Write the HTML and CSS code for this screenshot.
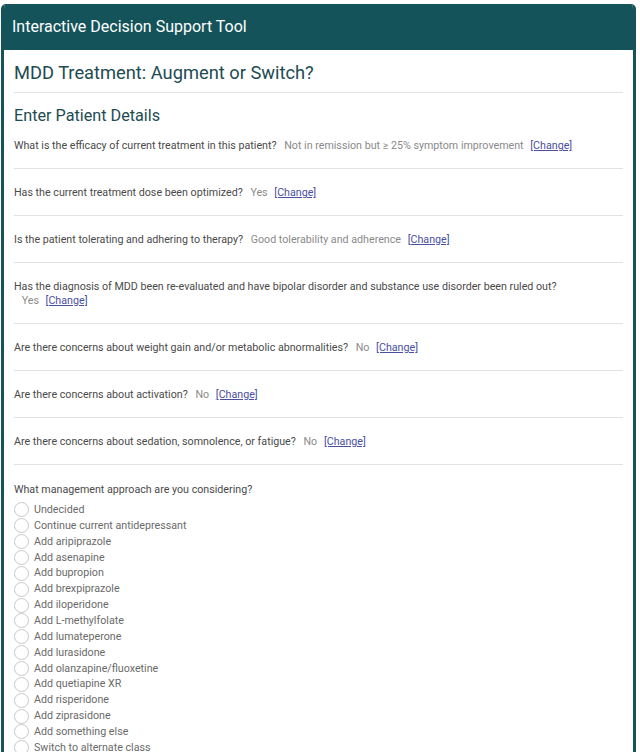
FILE: index.html
```html
<!DOCTYPE html>
<html>
<head>
<meta charset="utf-8">
<link rel="stylesheet" href="styles.css">
</head>
<body>
<div class="card">
  <div class="card-header">Interactive Decision Support Tool</div>
  <div class="card-body">
    <h1 class="title">MDD Treatment: Augment or Switch?</h1>
    <h2 class="subtitle">Enter Patient Details</h2>
    <div class="row first"><span class="q">What is the efficacy of current treatment in this patient?</span> <span class="a">Not in remission but ≥ 25% symptom improvement</span> <a class="chg" href="#">[Change]</a></div>
    <div class="row"><span class="q">Has the current treatment dose been optimized?</span> <span class="a">Yes</span> <a class="chg" href="#">[Change]</a></div>
    <div class="row"><span class="q">Is the patient tolerating and adhering to therapy?</span> <span class="a">Good tolerability and adherence</span> <a class="chg" href="#">[Change]</a></div>
    <div class="row"><span class="q">Has the diagnosis of MDD been re-evaluated and have bipolar disorder and substance use disorder been ruled out?</span><br>&nbsp;<span class="a">Yes</span> <a class="chg" href="#">[Change]</a></div>
    <div class="row"><span class="q">Are there concerns about weight gain and/or metabolic abnormalities?</span> <span class="a">No</span> <a class="chg" href="#">[Change]</a></div>
    <div class="row"><span class="q">Are there concerns about activation?</span> <span class="a">No</span> <a class="chg" href="#">[Change]</a></div>
    <div class="row"><span class="q">Are there concerns about sedation, somnolence, or fatigue?</span> <span class="a">No</span> <a class="chg" href="#">[Change]</a></div>
    <div class="question-block">
      <div class="q">What management approach are you considering?</div>
      <ul class="radios">
        <li><span class="radio"></span>Undecided</li>
        <li><span class="radio"></span>Continue current antidepressant</li>
        <li><span class="radio"></span>Add aripiprazole</li>
        <li><span class="radio"></span>Add asenapine</li>
        <li><span class="radio"></span>Add bupropion</li>
        <li><span class="radio"></span>Add brexpiprazole</li>
        <li><span class="radio"></span>Add iloperidone</li>
        <li><span class="radio"></span>Add L-methylfolate</li>
        <li><span class="radio"></span>Add lumateperone</li>
        <li><span class="radio"></span>Add lurasidone</li>
        <li><span class="radio"></span>Add olanzapine/fluoxetine</li>
        <li><span class="radio"></span>Add quetiapine XR</li>
        <li><span class="radio"></span>Add risperidone</li>
        <li><span class="radio"></span>Add ziprasidone</li>
        <li><span class="radio"></span>Add something else</li>
        <li><span class="radio"></span>Switch to alternate class</li>
      </ul>
    </div>
  </div>
</div>
</body>
</html>
```
FILE: styles.css
```css
html, body {
  margin: 0;
  padding: 0;
  background: #fff;
}
body {
  padding: 4px 4px 0 1px;
  font-family: Roboto, "Liberation Sans", sans-serif;
}
.card {
  border: 3px solid #14535a;
  border-top: none;
  border-radius: 5px 5px 0 0;
  overflow: hidden;
  height: 760px;
}
.card-header {
  background: #14535a;
  color: #fff;
  font-size: 16px;
  height: 46px;
  line-height: 46px;
  margin: 0 -3px;
  padding-left: 11px;
}
.card-body {
  padding: 0 10px 0 10px;
}
.title {
  margin: 0;
  font-weight: 400;
  font-size: 18.3px;
  color: #1d4b52;
  padding: 12px 0 8px;
  border-bottom: 1px solid #e2e2e2;
  line-height: 22px;
}
.subtitle {
  margin: 0;
  font-weight: 400;
  font-size: 16.2px;
  color: #1d4b52;
  padding: 12px 0 0;
  line-height: 22px;
}
.row {
  font-size: 10.7px;
  line-height: 14px;
  padding: 17px 0 15px;
  border-bottom: 1px solid #e2e2e2;
}
.row.first {
  padding-top: 12px;
}
.q {
  color: #4a4a4a;
}
.a {
  color: #8a8a8a;
  margin-left: 5px;
  margin-right: 4px;
}
.chg {
  color: #4a4fa0;
  text-decoration: underline;
}
.question-block {
  padding-top: 18px;
  font-size: 10.7px;
  line-height: 14px;
}
.radios {
  list-style: none;
  margin: 5px 0 0;
  padding: 0;
}
.radios li {
  display: flex;
  align-items: center;
  height: 15.87px;
  color: #6a6a6a;
}
.radio {
  border: 1px solid #c8c8c8;
  border-radius: 50%;
  margin-right: 5px;
  flex: none;
  box-sizing: border-box;
  width: 15px;
  height: 15px;
}
```
